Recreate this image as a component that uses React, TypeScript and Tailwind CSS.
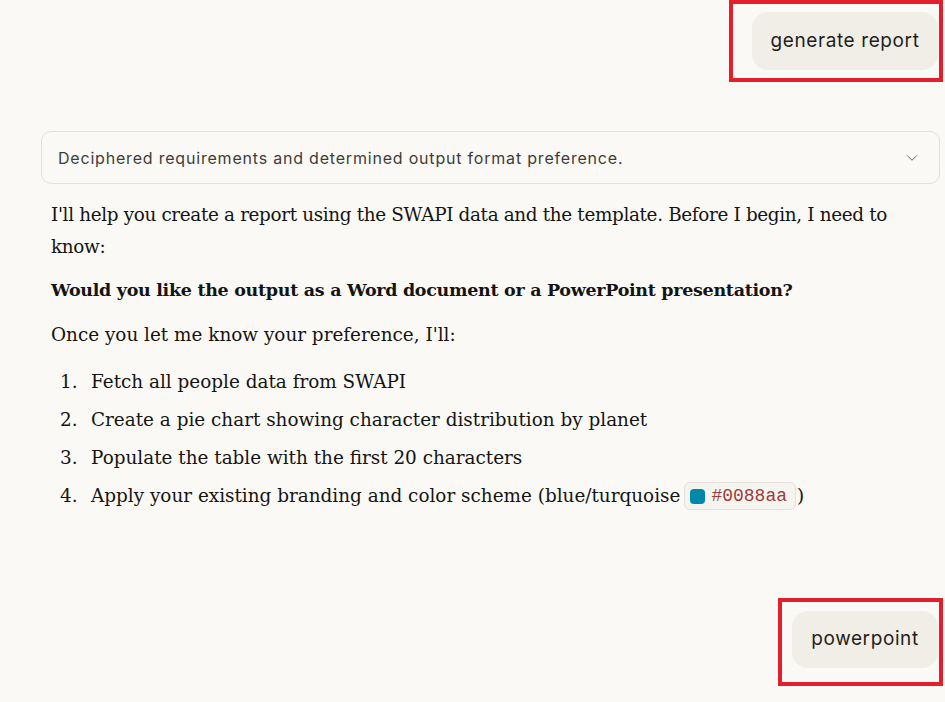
import { ChevronDown } from "lucide-react";

const serif = { fontFamily: '"DejaVu Serif", "Liberation Serif", serif' };
const sans = { fontFamily: "Inter, 'Noto Sans', sans-serif" };

function Marked({ children, className }: { children: React.ReactNode; className: string }) {
  return <div className={`border-4 border-[#e41e2b] ${className}`}>{children}</div>;
}

function UserBubble({ text, className }: { text: string; className: string }) {
  return (
    <div
      className={`flex items-center rounded-2xl bg-[#f0eee6] text-[19px] tracking-[0.6px] text-[#1f1e1d] ${className}`}
      style={sans}
    >
      {text}
    </div>
  );
}

const steps = [
  "Fetch all people data from SWAPI",
  "Create a pie chart showing character distribution by planet",
  "Populate the table with the first 20 characters",
];

export default function App() {
  return (
    <div className="min-h-[702px] w-[945px] overflow-hidden bg-[#faf9f5] text-[#141413]">
      <div className="flex justify-end pr-[2px]">
        <Marked className="w-[214px] h-[82px] pl-[19px] pt-[8px] pr-[1px]">
          <UserBubble text="generate report" className="h-[58px] w-full justify-center" />
        </Marked>
      </div>

      <div className="ml-[41px] mr-[5px] mt-[49px] flex h-[53px] items-center justify-between rounded-[10px] border border-[#e3e0d7] pl-[16px] pr-[18px]">
        <span className="text-[16px] tracking-[0.8px] text-[#3d3d3a]" style={sans}>
          Deciphered requirements and determined output format preference.
        </span>
        <ChevronDown size={18} strokeWidth={1.3} className="text-[#5e5d59]" />
      </div>

      <div className="pl-[51px] text-[18.4px] leading-[32px]" style={serif}>
        <p className="mt-[15px] w-[860px] tracking-[-0.35px]">
          I'll help you create a report using the SWAPI data and the template. Before I begin, I need to know:
        </p>
        <p className="mt-[11px] text-[17.5px] font-bold tracking-[-0.3px]">
          Would you like the output as a Word document or a PowerPoint presentation?
        </p>
        <p className="mt-[13px]">Once you let me know your preference, I'll:</p>
        <ol className="mt-[15px] flex flex-col gap-[6px]">
          {steps.map((s, i) => (
            <li key={s} className="flex">
              <span className="ml-[9px] w-[31px]">{i + 1}.</span>
              <span>{s}</span>
            </li>
          ))}
          <li className="flex items-center">
            <span className="ml-[9px] w-[31px]">4.</span>
            <span>Apply your existing branding and color scheme (blue/turquoise</span>
            <span className="ml-[4px] mr-[1px] inline-flex h-[28px] items-center gap-[6px] rounded-[6px] border border-[#e3e0d7] bg-[#f5f4ef] pl-[5px] pr-[8px]">
              <span className="h-[15px] w-[15px] rounded-[4px] bg-[#0088aa]" />
              <span
                className="text-[18px] text-[#9d3b3b]"
                style={{ fontFamily: '"Liberation Mono", "DejaVu Sans Mono", monospace' }}
              >
                #0088aa
              </span>
            </span>
            <span>)</span>
          </li>
        </ol>
      </div>

      <div className="mt-[86px] flex justify-end pr-[2px]">
        <Marked className="w-[165px] h-[88px] pl-[10px] pt-[9px] pr-[1px]">
          <UserBubble text="powerpoint" className="h-[57px] w-full justify-center" />
        </Marked>
      </div>
    </div>
  );
}
